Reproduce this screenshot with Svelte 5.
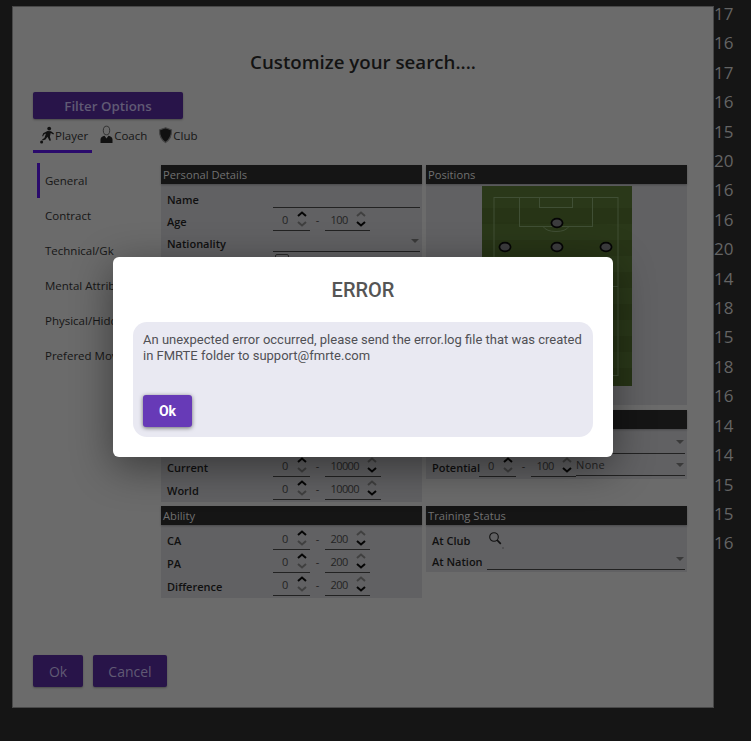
<script>
  const sideNumbers = [17, 16, 17, 16, 15, 20, 16, 16, 20, 14, 18, 15, 18, 16, 14, 14, 15, 15, 16];
  const sections = ['General', 'Contract', 'Technical/Gk', 'Mental Attributes', 'Physical/Hidden', 'Prefered Moves'];
</script>

{#snippet spinner(from, to)}
  <div class="range">
    <div class="spin first">
      <span class="val">{from}</span>
      <svg class="arrows" width="10" height="18" viewBox="0 0 10 18">
        <path d="M1 6 5 2.500l4 3.500" class="on" />
        <path d="M1 12 5 15.500l4-3.500" class="off" />
      </svg>
    </div>
    <span class="dash">-</span>
    <div class="spin second">
      <span class="val">{to}</span>
      <svg class="arrows" width="10" height="18" viewBox="0 0 10 18">
        <path d="M1 6 5 2.500l4 3.500" class="off" />
        <path d="M1 12 5 15.500l4-3.500" class="on" />
      </svg>
    </div>
  </div>
{/snippet}

{#snippet drop(text = '')}
  <div class="drop">
    <span>{text}</span>
    <svg width="8" height="4" viewBox="0 0 8 4"><path d="M0 0h8L4 4z" fill="#3a3a3a" /></svg>
  </div>
{/snippet}

<div class="page">
  <div class="window">
    <h1>Customize your search....</h1>

    <div class="filter-btn">Filter Options</div>

    <div class="tabs">
      <div class="tab active">
        <svg width="16" height="20" viewBox="0 0 16 20">
          <circle cx="10.200" cy="3.600" r="1.900" fill="#111" />
          <path d="M8.500 6 12 6.200l3 2.400-.7.9-2.600-1.400-.8 3.700 1 3.600-1.400.4-2-4-2 2.800-3 .9-.4-1.100 2.300-1.400 1.600-4.500-2 1-1 2-.8-.4 1-2.900z" fill="#111" />
          <circle cx="2.600" cy="17" r="1.500" fill="#111" />
        </svg>
        <span>Player</span>
      </div>
      <div class="tab">
        <svg width="15" height="20" viewBox="0 0 15 20">
          <ellipse cx="7.500" cy="5.500" rx="3.200" ry="4.300" fill="none" stroke="#2a2a2a" stroke-width="0.900" />
          <path d="M1.500 18v-3.500C1.500 12.500 3.500 11.300 5.500 10.800L7.500 13.500l2-2.700c2 .5 4 1.700 4 3.700V18z" fill="#111" />
        </svg>
        <span>Coach</span>
      </div>
      <div class="tab">
        <svg width="15" height="20" viewBox="0 0 15 20">
          <path d="M7.500 2.800 13.500 5c.2 5.500-1.500 9.500-6 12.500C3 14.500 1.300 10.500 1.500 5z" fill="#111" stroke="#444" stroke-width="1.200" />
        </svg>
        <span>Club</span>
      </div>
    </div>

    <div class="body">
      <nav class="side">
        {#each sections as s, i}
          <div class="side-item" class:current={i === 0}>{s}</div>
        {/each}
      </nav>

      <div class="panels">
        <section class="panel personal">
          <header>Personal Details</header>
          <div class="rows">
            <div class="row name"><div class="lbl">Name</div><div class="line"></div></div>
            <div class="row"><div class="lbl">Age</div>{@render spinner(0, 100)}</div>
            <div class="row nation"><div class="lbl">Nationality</div>{@render drop()}</div>
            <div class="check-row"><span class="check"></span></div>
          </div>
        </section>

        <section class="panel positions">
          <header>Positions</header>
          <svg class="pitch" width="150" height="200" viewBox="0 0 150 200">
            <rect width="150" height="200" fill="#2a3819" />
            <g fill="#273416">
              <rect y="22" width="150" height="16" />
              <rect y="54" width="150" height="16" />
              <rect y="86" width="150" height="16" />
              <rect y="118" width="150" height="16" />
              <rect y="150" width="150" height="16" />
              <rect y="182" width="150" height="18" />
            </g>
            <g fill="none" stroke="#404f35" stroke-width="1">
              <rect x="12" y="11.500" width="124" height="178" />
              <rect x="37.500" y="11.500" width="73" height="29" />
              <rect x="57.500" y="11.500" width="33" height="10" />
              <path d="M61 40.500a14 8 0 0 0 26 0" />
              <path d="M12 100.500h124" />
              <rect x="37.500" y="160.500" width="73" height="29" />
            </g>
            <g fill="#3c3c3e" stroke="#050505" stroke-width="1.700">
              <ellipse cx="75" cy="37" rx="5.600" ry="4.400" />
              <ellipse cx="23" cy="61" rx="5.600" ry="4.400" />
              <ellipse cx="75" cy="61" rx="5.600" ry="4.400" />
              <ellipse cx="124" cy="61" rx="5.600" ry="4.400" />
            </g>
          </svg>
        </section>

        <section class="panel">
          <header></header>
          <div class="rows">
            <div class="row"><div class="lbl"></div>{@render spinner(0, 10000)}</div>
            <div class="row"><div class="lbl">Current</div>{@render spinner(0, 10000)}</div>
            <div class="row"><div class="lbl">World</div>{@render spinner(0, 10000)}</div>
          </div>
        </section>

        <section class="panel">
          <header></header>
          <div class="rows">
            <div class="row"><div class="lbl narrow"></div>{@render drop()}</div>
            <div class="row potential"><div class="lbl tiny">Potential</div>{@render spinner(0, 100)}{@render drop('None')}</div>
          </div>
        </section>

        <section class="panel">
          <header>Ability</header>
          <div class="rows">
            <div class="row"><div class="lbl">CA</div>{@render spinner(0, 200)}</div>
            <div class="row"><div class="lbl">PA</div>{@render spinner(0, 200)}</div>
            <div class="row"><div class="lbl">Difference</div>{@render spinner(0, 200)}</div>
          </div>
        </section>

        <section class="panel">
          <header>Training Status</header>
          <div class="rows">
            <div class="row club">
              <div class="lbl narrow">At Club</div>
              <svg class="search" width="19" height="19" viewBox="0 0 19 19">
                <circle cx="7" cy="7" r="4.300" fill="none" stroke="#111" stroke-width="1.100" />
                <path d="M10 10 13.800 13.800" stroke="#111" stroke-width="1.700" />
                <rect x="15.500" y="17.500" width="1" height="1" fill="#222" />
              </svg>
            </div>
            <div class="row nation"><div class="lbl narrow">At Nation</div>{@render drop()}</div>
          </div>
        </section>
      </div>
    </div>

    <div class="footer">
      <div class="btn ok">Ok</div>
      <div class="btn cancel">Cancel</div>
    </div>

    <div class="overlay">
      <div class="dialog">
        <h2>ERROR</h2>
        <div class="dialog-box">
          <p>An unexpected error occurred, please send the error.log file that was created in FMRTE folder to support@fmrte.com</p>
          <div class="dialog-ok">Ok</div>
        </div>
      </div>
    </div>
  </div>

  <div class="numbers">
    {#each sideNumbers as n}
      <div>{n}</div>
    {/each}
  </div>
</div>

<style>
  :global(body) {
    margin: 0;
    background: #151515;
  }

  .page {
    display: flex;
    height: 741px;
    overflow: hidden;
    font-family: "Open Sans", sans-serif;
  }

  .window {
    position: relative;
    box-sizing: border-box;
    width: 702px;
    height: 702px;
    margin: 6px 0 0 12px;
    padding: 0 20px;
    border: 1px solid #484848;
    background: #6b6b6b;
    display: flex;
    flex-direction: column;
  }

  h1 {
    margin: 41px 0 0;
    height: 28px;
    line-height: 27px;
    font-size: 18.700px;
    font-weight: 600;
    color: #131313;
    text-align: center;
  }

  .filter-btn {
    width: 150px;
    height: 27px;
    margin-top: 16px;
    line-height: 28px;
    text-align: center;
    font-size: 13.300px;
    font-weight: 600;
    color: #605a74;
    background: #281449;
    border-radius: 2px;
    box-shadow: 0 1px 2px rgba(0, 0, 0, 0.3);
  }

  .tabs {
    display: flex;
    height: 34px;
  }

  .tab {
    display: flex;
    align-items: center;
    padding: 3px 5px 0 6px;
    height: 29px;
    box-sizing: border-box;
    font-size: 11.500px;
    color: #161616;
  }

  .tab.active {
    height: 34px;
    padding-top: 1px;
    padding-bottom: 0;
    padding-right: 4px;
    margin-right: 1px;
    border-bottom: 3px solid #2a0a6c;
  }

  .body {
    display: flex;
    margin-top: 10px;
  }

  .side {
    width: 124px;
    margin-left: 4px;
    flex-shrink: 0;
  }

  .side-item {
    height: 35px;
    line-height: 35px;
    padding-left: 8px;
    font-size: 11.500px;
    color: #161616;
    white-space: nowrap;
  }

  .side-item.current {
    box-shadow: inset 3px 0 0 #2a0a6c;
  }

  .panels {
    display: grid;
    grid-template-columns: 261px 261px;
    grid-template-rows: 241px 92px auto;
    column-gap: 4px;
    row-gap: 4px;
    align-items: start;
    margin-top: 2px;
  }

  .panel {
    background: #616163;
  }

  .personal,
  .positions {
    height: 240px;
  }

  .positions {
    display: flex;
    flex-direction: column;
    align-items: center;
  }

  .panel header {
    align-self: stretch;
    height: 19px;
    line-height: 19px;
    padding-left: 2px;
    font-size: 11.200px;
    color: #707070;
    background: #151515;
    box-shadow: 0 1px 2px rgba(0, 0, 0, 0.25);
  }

  .pitch {
    display: block;
    margin-top: 2px;
  }

  .rows {
    padding: 2px 2px 2px 6px;
    display: flex;
    flex-direction: column;
  }

  .personal .rows {
    padding-top: 1px;
  }

  .row {
    display: flex;
    align-items: flex-end;
    height: 23px;
  }

  .row.nation {
    height: 21px;
  }

  .row.club {
    height: 22px;
  }

  .lbl {
    width: 106px;
    flex-shrink: 0;
    height: 16px;
    line-height: 16px;
    margin-bottom: 1px;
    font-size: 11px;
    font-weight: 600;
    color: #101010;
  }

  .name .lbl,
  .nation .lbl,
  .club .lbl {
    margin-bottom: 0;
  }

  .lbl.narrow {
    width: 55px;
  }

  .lbl.tiny {
    width: 47px;
    white-space: nowrap;
  }

  .line {
    flex: 1;
    border-bottom: 1px solid #222;
    height: 100%;
    box-sizing: border-box;
  }

  .range {
    display: flex;
    align-items: center;
    flex-shrink: 0;
  }

  .spin {
    display: flex;
    align-items: center;
    height: 23px;
    border-bottom: 1px solid #222;
    box-sizing: border-box;
  }

  .spin.first {
    width: 37px;
  }

  .spin.second {
    padding-left: 5.500px;
  }

  .val {
    font-size: 11px;
    letter-spacing: -0.600px;
    color: #242424;
  }

  .first .val {
    flex: 1;
    text-align: center;
  }

  .second .val {
    margin-right: 8.500px;
  }

  .arrows {
    flex-shrink: 0;
    margin-right: 4px;
    fill: none;
    stroke-width: 2;
  }

  .first .arrows {
    margin-right: 3.500px;
  }

  .arrows .on {
    stroke: #050505;
  }

  .arrows .off {
    stroke: #404040;
  }

  .dash {
    width: 15px;
    text-align: center;
    font-size: 11px;
    color: #1e1e1e;
  }

  .drop {
    flex: 1;
    height: 100%;
    box-sizing: border-box;
    border-bottom: 1px solid #222;
    display: flex;
    align-items: center;
    justify-content: space-between;
    padding-right: 1px;
    padding-bottom: 1px;
    font-size: 11px;
    color: #242424;
    letter-spacing: 0.300px;
  }

  .potential .drop {
    margin-bottom: 1px;
    padding-bottom: 0;
    height: 22px;
  }

  .check-row {
    display: flex;
    padding: 2px 0 0 108px;
  }

  .check {
    width: 14px;
    height: 14px;
    border: 1px solid #2a2a2a;
    border-radius: 2px;
    box-sizing: border-box;
  }

  .search {
    align-self: flex-start;
    margin-top: 3px;
  }

  .footer {
    display: flex;
    gap: 10px;
    margin-top: auto;
    margin-bottom: 20px;
  }

  .btn {
    height: 32px;
    line-height: 33px;
    text-align: center;
    font-size: 14px;
    color: #605a74;
    background: #281449;
    border-radius: 2px;
    box-shadow: 0 1px 2px rgba(0, 0, 0, 0.3);
  }

  .btn.ok {
    width: 50px;
  }

  .btn.cancel {
    width: 74px;
  }

  .overlay {
    position: absolute;
    inset: 0;
    display: flex;
    align-items: center;
    justify-content: center;
  }

  .dialog {
    width: 500px;
    height: 200px;
    box-sizing: border-box;
    padding: 0 20px;
    background: #fff;
    border-radius: 6px;
    box-shadow: 0 10px 40px rgba(0, 0, 0, 0.45);
    font-family: Roboto, sans-serif;
  }

  h2 {
    margin: 0;
    height: 65px;
    line-height: 67px;
    font-size: 20px;
    font-weight: 500;
    color: #555;
    text-align: center;
  }

  .dialog-box {
    box-sizing: border-box;
    height: 115px;
    padding: 10px;
    background: #e9e9f2;
    border-radius: 14px;
  }

  p {
    margin: 0;
    height: 63px;
    font-size: 13px;
    line-height: 16px;
    color: #505055;
  }

  .dialog-ok {
    width: 49px;
    height: 32px;
    line-height: 32px;
    text-align: center;
    font-size: 14px;
    font-weight: 700;
    color: #fff;
    background: #673ab7;
    border-radius: 3px;
    box-shadow: 0 1px 4px rgba(0, 0, 0, 0.55);
  }

  .numbers {
    margin-top: -1px;
    font-size: 17px;
    color: #646464;
    line-height: 29.400px;
  }
</style>
